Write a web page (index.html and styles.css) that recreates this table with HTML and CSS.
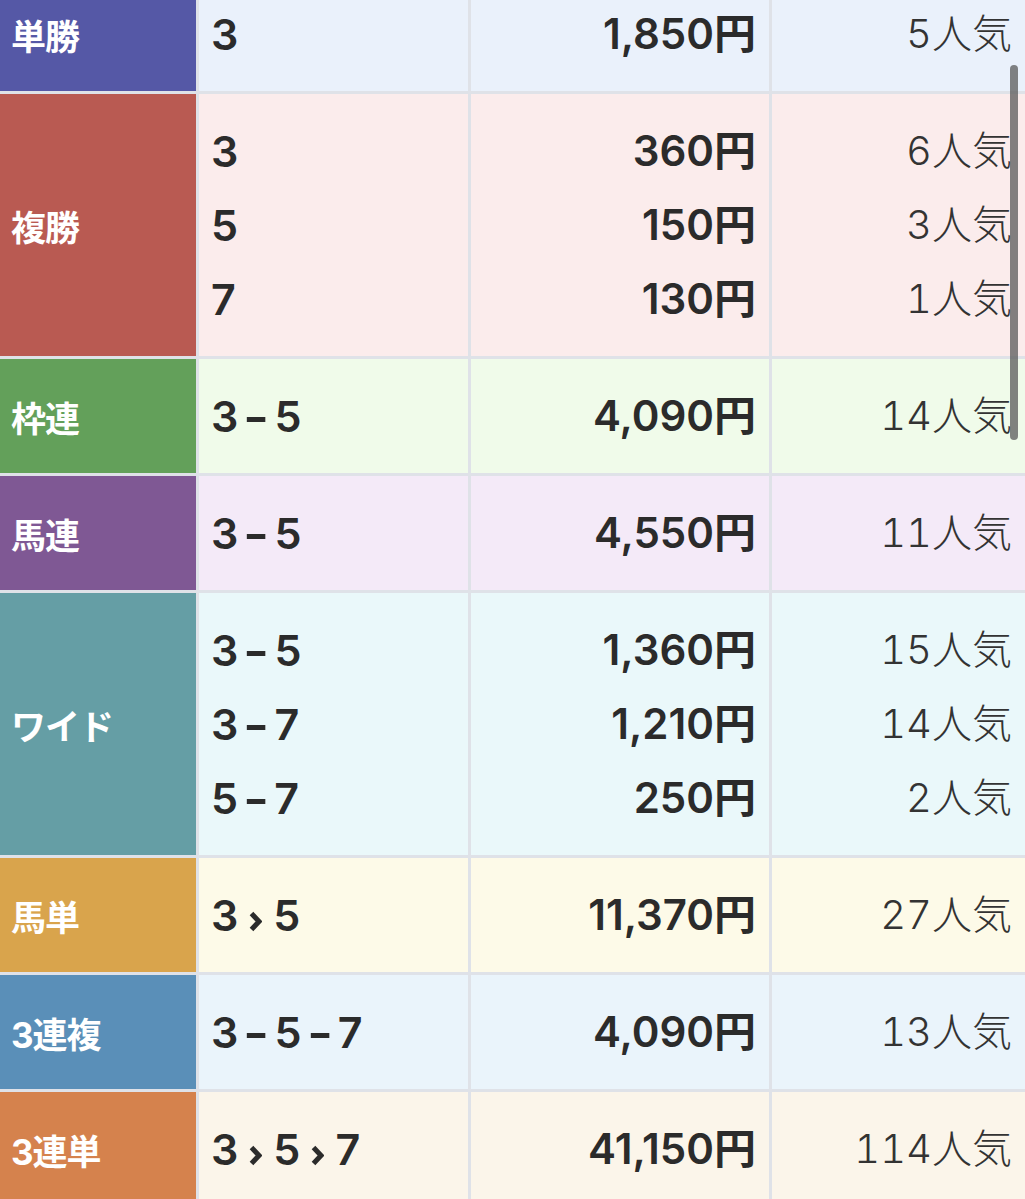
FILE: index.html
```html
<!DOCTYPE html>
<html lang="ja">
<head>
<meta charset="utf-8">
<title>払戻金</title>
<link rel="stylesheet" href="styles.css">
</head>
<body>
<div class="payouts">
  <div class="row tansho">
    <div class="label">単勝</div>
    <div class="cell combo"><div>3</div></div>
    <div class="cell pay"><div>1,850円</div></div>
    <div class="cell pop"><div>5人気</div></div>
  </div>
  <div class="row fukusho">
    <div class="label">複勝</div>
    <div class="cell combo"><div>3</div><div>5</div><div>7</div></div>
    <div class="cell pay"><div>360円</div><div>150円</div><div>130円</div></div>
    <div class="cell pop"><div>6人気</div><div>3人気</div><div>1人気</div></div>
  </div>
  <div class="row wakuren">
    <div class="label">枠連</div>
    <div class="cell combo"><div>3<span class="sep">-</span>5</div></div>
    <div class="cell pay"><div>4,090円</div></div>
    <div class="cell pop"><div>14人気</div></div>
  </div>
  <div class="row umaren">
    <div class="label">馬連</div>
    <div class="cell combo"><div>3<span class="sep">-</span>5</div></div>
    <div class="cell pay"><div>4,550円</div></div>
    <div class="cell pop"><div>11人気</div></div>
  </div>
  <div class="row wide">
    <div class="label">ワイド</div>
    <div class="cell combo"><div>3<span class="sep">-</span>5</div><div>3<span class="sep">-</span>7</div><div>5<span class="sep">-</span>7</div></div>
    <div class="cell pay"><div>1,360円</div><div>1,210円</div><div>250円</div></div>
    <div class="cell pop"><div>15人気</div><div>14人気</div><div>2人気</div></div>
  </div>
  <div class="row umatan">
    <div class="label">馬単</div>
    <div class="cell combo"><div>3<svg class="arr" viewBox="0 0 13 21" aria-label="›"><polyline points="2.5,2.5 10,10.5 2.5,18.5"/></svg>5</div></div>
    <div class="cell pay"><div>11,370円</div></div>
    <div class="cell pop"><div>27人気</div></div>
  </div>
  <div class="row sanfuku">
    <div class="label">3連複</div>
    <div class="cell combo"><div>3<span class="sep">-</span>5<span class="sep">-</span>7</div></div>
    <div class="cell pay"><div>4,090円</div></div>
    <div class="cell pop"><div>13人気</div></div>
  </div>
  <div class="row santan">
    <div class="label">3連単</div>
    <div class="cell combo"><div>3<svg class="arr" viewBox="0 0 13 21" aria-label="›"><polyline points="2.5,2.5 10,10.5 2.5,18.5"/></svg>5<svg class="arr" viewBox="0 0 13 21" aria-label="›"><polyline points="2.5,2.5 10,10.5 2.5,18.5"/></svg>7</div></div>
    <div class="cell pay"><div>41,150円</div></div>
    <div class="cell pop"><div>114人気</div></div>
  </div>
</div>
<div class="scrollbar"></div>
</body>
</html>
```
FILE: styles.css
```css
html, body {
  margin: 0;
  padding: 0;
  overflow: hidden;
  background: #dfe2e8;
}
body {
  font-family: Inter, "Noto Sans CJK JP", sans-serif;
  color: #2b2b2b;
}
.payouts {
  margin-top: -23px;
  display: flex;
  flex-direction: column;
  gap: 3px;
  background: #dfe2e8;
}
.row {
  display: grid;
  grid-template-columns: 196px 269px 298px 1fr;
  column-gap: 3px;
}
.label {
  display: flex;
  align-items: center;
  padding-left: 11px;
  color: #fff;
  font-weight: 700;
  font-size: 35px;
  letter-spacing: -1px;
}
.cell {
  padding: 20px 13px;
  display: flex;
  flex-direction: column;
  justify-content: center;
  font-size: 42px;
  line-height: 74px;
}
.combo {
  padding-left: 12px;
  font-weight: 600;
  font-size: 43px;
}
.pay {
  text-align: right;
  font-weight: 600;
}
.pop {
  text-align: right;
  font-weight: 300;
  font-size: 40px;
  color: #333;
  font-variant-numeric: tabular-nums;
}
.sep {
  display: inline-block;
  margin: 0 8px;
  transform: scaleX(1.3);
  font-weight: 700;
}
.arr {
  width: 13px;
  height: 21px;
  margin: 0 11px;
  vertical-align: -1px;
  fill: none;
  stroke: #2b2b2b;
  stroke-width: 5;
}
.tansho .label { background: #5558a6; }
.tansho .cell { background: #eaf1fb; }
.fukusho .label { background: #b95a52; }
.fukusho .cell { background: #fbecec; }
.wakuren .label { background: #63a05a; }
.wakuren .cell { background: #f0fbea; }
.umaren .label { background: #7f5894; }
.umaren .cell { background: #f4eaf8; }
.wide .label { background: #659ea5; }
.wide .cell { background: #eaf8fa; }
.umatan .label { background: #d9a44c; }
.umatan .cell { background: #fdfae8; }
.sanfuku .label { background: #5a8fb8; }
.sanfuku .cell { background: #eaf4fb; }
.santan .label { background: #d5824d; }
.santan .cell { background: #fbf5ea; }
.scrollbar {
  position: fixed;
  right: 7px;
  top: 65px;
  width: 8px;
  height: 375px;
  border-radius: 4px;
  background: rgba(90, 90, 90, 0.75);
}
```
